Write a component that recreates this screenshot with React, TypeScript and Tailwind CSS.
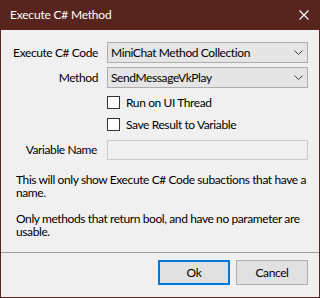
import React from "react";

function Chevron() {
  return (
    <svg width="9" height="5" viewBox="0 0 9 5" className="shrink-0">
      <path d="M0.5 0.5 L4.5 4.5 L8.5 0.5" fill="none" stroke="#404040" strokeWidth="1" />
    </svg>
  );
}

function Select({ value }: { value: string }) {
  return (
    <div className="w-[201px] h-[21px] bg-[#e5e5e5] border border-[#acacac] flex items-center pl-[3px] pr-[4px]">
      <span className="flex-1 text-black leading-none whitespace-nowrap">{value}</span>
      <Chevron />
    </div>
  );
}

function Checkbox({ label }: { label: string }) {
  return (
    <div className="flex items-center h-[13px]">
      <div className="w-[13px] h-[13px] bg-white border border-[#333333]" />
      <span className="ml-[6px] leading-none whitespace-nowrap">{label}</span>
    </div>
  );
}

export default function App() {
  return (
    <div className="w-[320px] h-[298px] bg-[#58251e] px-px pb-px flex flex-col font-['Lato',sans-serif] text-[12px] tracking-[-0.4px] text-black">
      <div className="h-[30px] flex items-center justify-between pl-[9px] pr-[10px]">
        <span className="text-white text-[12px] tracking-[-0.2px]">Execute C# Method</span>
        <svg width="10" height="10" viewBox="0 0 10 10">
          <path d="M0.5 0.5 L9.5 9.5 M9.5 0.5 L0.5 9.5" stroke="#ffffff" strokeWidth="1.1" />
        </svg>
      </div>
      <div className="flex-1 bg-[#f0f0f0] flex flex-col">
        <div className="pt-[12px] flex flex-col">
          <div className="flex items-center">
            <div className="w-[97px] text-right whitespace-nowrap">Execute C# Code</div>
            <div className="ml-[9px]">
              <Select value="MiniChat Method Collection" />
            </div>
          </div>
          <div className="flex items-center mt-[4px]">
            <div className="w-[97px] text-right whitespace-nowrap">Method</div>
            <div className="ml-[9px]">
              <Select value="SendMessageVkPlay" />
            </div>
          </div>
          <div className="ml-[106px] mt-[8px]">
            <Checkbox label="Run on UI Thread" />
          </div>
          <div className="ml-[106px] mt-[9px]">
            <Checkbox label="Save Result to Variable" />
          </div>
          <div className="flex items-center mt-[9px]">
            <div className="w-[96px] text-right whitespace-nowrap">Variable Name</div>
            <div className="ml-[10px] w-[201px] h-[20px] border border-[#cccccc] bg-[#f0f0f0]" />
          </div>
          <div className="ml-[15px] mt-[13px] leading-[13px]">
            <div className="whitespace-nowrap">This will only show Execute C# Code subactions that have a</div>
            <div>name.</div>
          </div>
          <div className="ml-[15px] mt-[13px] leading-[13px]">
            <div className="whitespace-nowrap">Only methods that return bool, and have no parameter are</div>
            <div>usable.</div>
          </div>
        </div>
        <div className="flex-1" />
        <div className="h-px bg-[#a0a0a0]" />
        <div className="flex justify-end gap-[6px] pr-[11px] pt-[7px] pb-[12px]">
          <div className="w-[72px] h-[25px] border-2 border-[#0078d7] bg-[#e1e1e1] flex items-center justify-center">Ok</div>
          <div className="w-[72px] h-[25px] border border-[#adadad] bg-[#e1e1e1] flex items-center justify-center">Cancel</div>
        </div>
      </div>
    </div>
  );
}
